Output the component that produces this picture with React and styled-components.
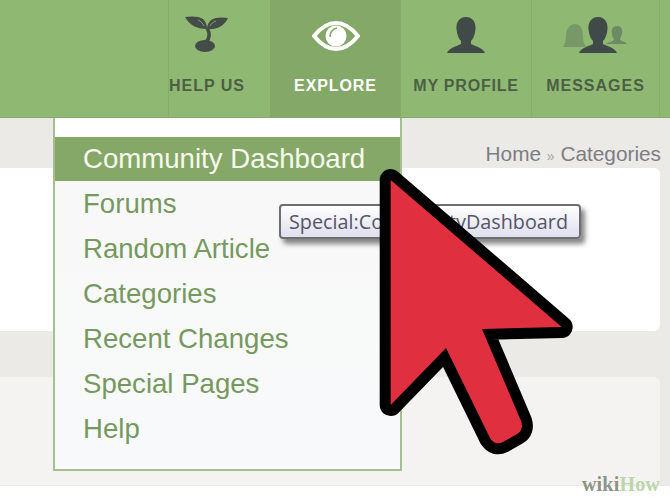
import React from 'react';
import styled, { createGlobalStyle } from 'styled-components';

const GlobalStyle = createGlobalStyle`
    html, body {
        margin: 0;
        padding: 0;
        background: #ebeae6;
    }
    * {
        box-sizing: border-box;
    }
`;

const Page = styled.div`
    position: relative;
    width: 670px;
    height: 502px;
    overflow: hidden;
    background: #ebeae6;
    font-family: "Liberation Sans", Arial, sans-serif;
`;

const Header = styled.header`
    height: 118px;
    display: flex;
    justify-content: flex-end;
    background: #8fb872;
    border-bottom: 1px solid #86a86c;
`;

const Tab = styled.div`
    width: ${(p) => p.$width}px;
    display: flex;
    flex-direction: column;
    align-items: center;
    padding-top: ${(p) => p.$top}px;
    padding-right: ${(p) => p.$shift || 0}px;
    background: ${(p) => (p.$active ? '#84a868' : 'transparent')};
    border-left: 1px solid ${(p) => (p.$active ? '#84a868' : '#86ae69')};
`;

const IconSlot = styled.div`
    height: ${(p) => 78 - p.$top}px;
    display: flex;
    align-items: flex-start;
    justify-content: center;
`;

const TabLabel = styled.span`
    font-size: 16px;
    line-height: 16px;
    font-weight: 700;
    letter-spacing: ${(p) => p.$spacing}px;
    white-space: nowrap;
    color: ${(p) => (p.$active ? '#ffffff' : '#4c5f45')};
`;

const Content = styled.main`
    display: flex;
    flex-direction: column;
`;

const Breadcrumb = styled.div`
    height: 50px;
    padding: 24px 9px 0 0;
    text-align: right;
    font-size: 20.8px;
    line-height: 24px;
    color: #7d7d84;

    span {
        font-size: 14px;
        color: #a3a3a3;
    }
`;

const Panel = styled.section`
    width: 660px;
    height: ${(p) => p.$height}px;
    margin-bottom: ${(p) => p.$gap}px;
    background: ${(p) => p.$bg};
    border-radius: 0 6px 6px 0;
`;

const Footer = styled.footer`
    height: 20px;
    margin-top: 1px;
    background: #ffffff;
`;

const Menu = styled.ul`
    position: absolute;
    left: 53px;
    top: 118px;
    width: 349px;
    height: 353px;
    margin: 0;
    padding: 19px 0 0;
    list-style: none;
    background: linear-gradient(#ffffff 0, #ffffff 19px, #f8f8f8 60px, #f8f9fa 100%);
    border: 2px solid #a6bf90;
    border-top: 0;
`;

const MenuItem = styled.li`
    height: ${(p) => (p.$active ? 44 : 45)}px;
    padding-left: 28px;
    font-size: 27.6px;
    line-height: ${(p) => (p.$active ? 43 : 45)}px;
    white-space: nowrap;
    background: ${(p) => (p.$active ? '#85a868' : 'transparent')};
    color: ${(p) => (p.$active ? '#f6fbec' : '#76995f')};
`;

const Tooltip = styled.div`
    position: absolute;
    left: 279px;
    top: 204px;
    width: 302px;
    height: 35px;
    padding-left: 8px;
    font-family: "Open Sans", sans-serif;
    font-size: 19.8px;
    line-height: 31px;
    white-space: nowrap;
    color: #55556a;
    background: linear-gradient(#ffffff, #dfdfee);
    border: 2px solid #6e6e6e;
    border-radius: 4px;
    box-shadow: 4px 5px 5px rgba(70, 70, 70, 0.65);
`;

const CursorArt = styled.svg`
    position: absolute;
    left: 0;
    top: 0;
`;

const Watermark = styled.div`
    position: absolute;
    right: 10px;
    bottom: 8px;
    font-family: "Liberation Serif", serif;
    font-size: 20px;
    line-height: 20px;
    font-weight: 700;
    letter-spacing: 0.2px;
    color: #8b948a;

    b {
        color: #bcd5aa;
    }
`;

const Sprout = () => (
    <svg width="44" height="38" viewBox="0 0 44 38">
        <path d="M0 2 C6 1 14 1 18 4 C21 7 22 10 22 14 C13 14 5 11 0 2 Z" fill="#434c46" />
        <path d="M43 3 C37 2 30 2 26 5 C23 8 22 11 22 14 C30 15 39 12 43 3 Z" fill="#434c46" />
        <path d="M13 5 C16 6 18 9 19 11" stroke="#8fb872" strokeWidth="0.8" fill="none" />
        <path d="M31 6 C28 7 26 9 25 11" stroke="#8fb872" strokeWidth="0.8" fill="none" />
        <path d="M22 13 C25 18 25 23 21 27" stroke="#434c46" strokeWidth="3.4" fill="none" />
        <ellipse cx="20" cy="31" rx="10" ry="6" fill="#434c46" />
    </svg>
);

const Eye = () => (
    <svg width="48" height="32" viewBox="0 0 48 32">
        <path d="M2 16 C10 6 17 3 24 3 C31 3 38 6 46 16 C38 26 31 29 24 29 C17 29 10 26 2 16 Z" fill="none" stroke="#fff" strokeWidth="4" />
        <circle cx="24" cy="16" r="10.5" fill="#fff" />
        <path d="M18 17 C18 12 21 9 25 8" fill="none" stroke="#84a868" strokeWidth="1.6" />
    </svg>
);

const personPath = 'M19 0 C26 0 29 6 28.5 12 C28 18 26 22 24 24 L24 27 C30 30 36 31 38 36 L0 36 C2 31 8 30 14 27 L14 24 C12 22 10 18 9.5 12 C9 6 12 0 19 0 Z';

const Person = () => (
    <svg width="38" height="36" viewBox="0 0 38 36">
        <path d={personPath} fill="#404a48" />
    </svg>
);

const Group = () => (
    <svg width="66" height="36" viewBox="0 0 66 36">
        <path d="M12 7 C18 7 20 14 20 20 C20 24 21 27 23 30 L0 30 C2 27 3 23 3 19 C3 13 6 7 12 7 Z" fill="#789868" />
        <path d="M54 9 C58 9 60 12 59 17 C58 20 57 21 57 23 C60 25 63 25 64 27 L43 27 C45 25 49 25 51 23 C51 21 49 20 49 17 C48 12 50 9 54 9 Z" fill="#6c8b64" />
        <g transform="translate(16 0)">
            <path d={personPath} fill="#404a48" />
        </g>
    </svg>
);

const tabs = [
    { label: 'HELP US', width: 102, top: 15, spacing: 1, shift: 25, icon: <Sprout /> },
    { label: 'EXPLORE', width: 130, top: 20, spacing: 0.9, icon: <Eye />, active: true },
    { label: 'MY PROFILE', width: 131, top: 17, spacing: 0.8, icon: <Person /> },
    { label: 'MESSAGES', width: 128, top: 17, spacing: 1, icon: <Group /> },
    { label: '', width: 11, top: 17, spacing: 0 },
];

const menuItems = ['Community Dashboard', 'Forums', 'Random Article', 'Categories', 'Recent Changes', 'Special Pages', 'Help'];

const App = () => {
    return (
        <Page>
            <GlobalStyle />
            <Header>
                {tabs.map((tab, i) => (
                    <Tab key={i} $width={tab.width} $top={tab.top} $active={tab.active} $shift={tab.shift}>
                        <IconSlot $top={tab.top}>{tab.icon}</IconSlot>
                        <TabLabel $active={tab.active} $spacing={tab.spacing}>{tab.label}</TabLabel>
                    </Tab>
                ))}
            </Header>
            <Content>
                <Breadcrumb>Home <span>»</span> Categories</Breadcrumb>
                <Panel $height={163} $gap={46} $bg="#ffffff" />
                <Panel $height={108} $gap={0} $bg="#f4f3f1" />
                <Footer />
            </Content>
            <Menu>
                {menuItems.map((item, i) => (
                    <MenuItem key={item} $active={i === 0}>{item}</MenuItem>
                ))}
            </Menu>
            <Tooltip>Special:CommunityDashboard</Tooltip>
            <CursorArt width="670" height="502" viewBox="0 0 670 502">
                <path
                    d="M390.7 180 L561.7 327 L482 329 L521 421 Q524 430 517 434 L503 442 Q495 446 490 438 L446 348 L390.7 405 Z"
                    fill="#e03040"
                    stroke="#000"
                    strokeWidth="22"
                    strokeLinejoin="round"
                    paintOrder="stroke"
                />
            </CursorArt>
            <Watermark>wiki<b>How</b></Watermark>
        </Page>
    );
};

export default App;
